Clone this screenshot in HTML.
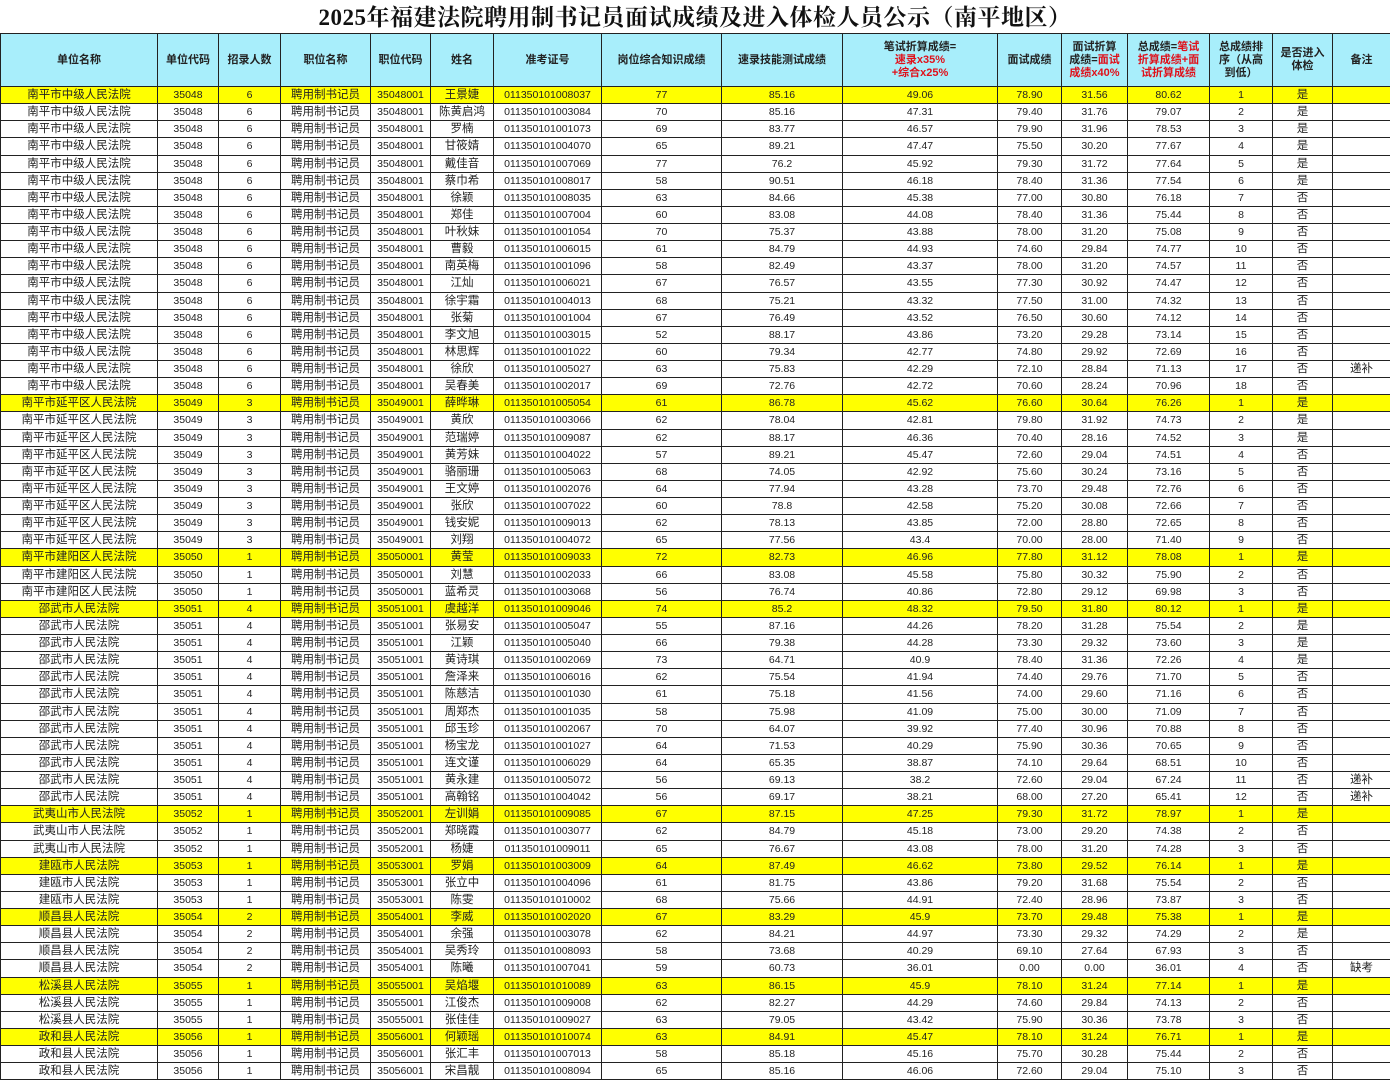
<!DOCTYPE html>
<html><head><meta charset="utf-8"><style>
*{margin:0;padding:0;box-sizing:border-box}
body{width:1390px;height:1080px;background:#fff;overflow:hidden;font-family:"Liberation Sans","Noto Sans CJK SC",sans-serif}
h1{position:absolute;left:0;top:1px;width:1390px;height:33px;text-align:center;font:bold 23px/34px "Liberation Serif","Noto Serif CJK SC",serif;color:#111;letter-spacing:0.5px}
table{position:absolute;left:0;top:33px;width:1390px;border-collapse:collapse;table-layout:fixed}
td,th{border:1px solid #222;text-align:center;font-size:10.5px;color:#222;white-space:nowrap;overflow:hidden;padding:0;line-height:14px}
th{background:#a8eefb;height:53px;font-weight:bold;font-size:11px;white-space:normal;line-height:13px}
th .r{color:#e0101a}
tr.d td{height:17.14px}
tr.y td{background:#ffff00}
td.n{font-size:11.5px}
</style></head><body>
<h1>2025年福建法院聘用制书记员面试成绩及进入体检人员公示（南平地区）</h1>
<table>
<colgroup><col style="width:157px"><col style="width:61px"><col style="width:62px"><col style="width:90px"><col style="width:60px"><col style="width:63px"><col style="width:108px"><col style="width:120px"><col style="width:121px"><col style="width:155px"><col style="width:64px"><col style="width:66px"><col style="width:82px"><col style="width:63px"><col style="width:60px"><col style="width:58px"></colgroup>
<tr><th>单位名称</th><th>单位代码</th><th>招录人数</th><th>职位名称</th><th>职位代码</th><th>姓名</th><th>准考证号</th><th>岗位综合知识成绩</th><th>速录技能测试成绩</th><th>笔试折算成绩=<br><span class="r">速录x35%<br>+综合x25%</span></th><th>面试成绩</th><th>面试折算<br>成绩=<span class="r">面试<br>成绩x40%</span></th><th>总成绩=<span class="r">笔试<br>折算成绩+面<br>试折算成绩</span></th><th>总成绩排<br>序（从高<br>到低）</th><th>是否进入<br>体检</th><th>备注</th></tr>
<tr class="d y"><td class="n">南平市中级人民法院</td><td>35048</td><td>6</td><td class="n">聘用制书记员</td><td>35048001</td><td class="n">王景婕</td><td>011350101008037</td><td>77</td><td>85.16</td><td>49.06</td><td>78.90</td><td>31.56</td><td>80.62</td><td>1</td><td class="n">是</td><td></td></tr>
<tr class="d"><td class="n">南平市中级人民法院</td><td>35048</td><td>6</td><td class="n">聘用制书记员</td><td>35048001</td><td class="n">陈黄启鸿</td><td>011350101003084</td><td>70</td><td>85.16</td><td>47.31</td><td>79.40</td><td>31.76</td><td>79.07</td><td>2</td><td class="n">是</td><td></td></tr>
<tr class="d"><td class="n">南平市中级人民法院</td><td>35048</td><td>6</td><td class="n">聘用制书记员</td><td>35048001</td><td class="n">罗楠</td><td>011350101001073</td><td>69</td><td>83.77</td><td>46.57</td><td>79.90</td><td>31.96</td><td>78.53</td><td>3</td><td class="n">是</td><td></td></tr>
<tr class="d"><td class="n">南平市中级人民法院</td><td>35048</td><td>6</td><td class="n">聘用制书记员</td><td>35048001</td><td class="n">甘筱婧</td><td>011350101004070</td><td>65</td><td>89.21</td><td>47.47</td><td>75.50</td><td>30.20</td><td>77.67</td><td>4</td><td class="n">是</td><td></td></tr>
<tr class="d"><td class="n">南平市中级人民法院</td><td>35048</td><td>6</td><td class="n">聘用制书记员</td><td>35048001</td><td class="n">戴佳音</td><td>011350101007069</td><td>77</td><td>76.2</td><td>45.92</td><td>79.30</td><td>31.72</td><td>77.64</td><td>5</td><td class="n">是</td><td></td></tr>
<tr class="d"><td class="n">南平市中级人民法院</td><td>35048</td><td>6</td><td class="n">聘用制书记员</td><td>35048001</td><td class="n">蔡巾希</td><td>011350101008017</td><td>58</td><td>90.51</td><td>46.18</td><td>78.40</td><td>31.36</td><td>77.54</td><td>6</td><td class="n">是</td><td></td></tr>
<tr class="d"><td class="n">南平市中级人民法院</td><td>35048</td><td>6</td><td class="n">聘用制书记员</td><td>35048001</td><td class="n">徐颖</td><td>011350101008035</td><td>63</td><td>84.66</td><td>45.38</td><td>77.00</td><td>30.80</td><td>76.18</td><td>7</td><td class="n">否</td><td></td></tr>
<tr class="d"><td class="n">南平市中级人民法院</td><td>35048</td><td>6</td><td class="n">聘用制书记员</td><td>35048001</td><td class="n">郑佳</td><td>011350101007004</td><td>60</td><td>83.08</td><td>44.08</td><td>78.40</td><td>31.36</td><td>75.44</td><td>8</td><td class="n">否</td><td></td></tr>
<tr class="d"><td class="n">南平市中级人民法院</td><td>35048</td><td>6</td><td class="n">聘用制书记员</td><td>35048001</td><td class="n">叶秋妹</td><td>011350101001054</td><td>70</td><td>75.37</td><td>43.88</td><td>78.00</td><td>31.20</td><td>75.08</td><td>9</td><td class="n">否</td><td></td></tr>
<tr class="d"><td class="n">南平市中级人民法院</td><td>35048</td><td>6</td><td class="n">聘用制书记员</td><td>35048001</td><td class="n">曹毅</td><td>011350101006015</td><td>61</td><td>84.79</td><td>44.93</td><td>74.60</td><td>29.84</td><td>74.77</td><td>10</td><td class="n">否</td><td></td></tr>
<tr class="d"><td class="n">南平市中级人民法院</td><td>35048</td><td>6</td><td class="n">聘用制书记员</td><td>35048001</td><td class="n">南英梅</td><td>011350101001096</td><td>58</td><td>82.49</td><td>43.37</td><td>78.00</td><td>31.20</td><td>74.57</td><td>11</td><td class="n">否</td><td></td></tr>
<tr class="d"><td class="n">南平市中级人民法院</td><td>35048</td><td>6</td><td class="n">聘用制书记员</td><td>35048001</td><td class="n">江灿</td><td>011350101006021</td><td>67</td><td>76.57</td><td>43.55</td><td>77.30</td><td>30.92</td><td>74.47</td><td>12</td><td class="n">否</td><td></td></tr>
<tr class="d"><td class="n">南平市中级人民法院</td><td>35048</td><td>6</td><td class="n">聘用制书记员</td><td>35048001</td><td class="n">徐宇霜</td><td>011350101004013</td><td>68</td><td>75.21</td><td>43.32</td><td>77.50</td><td>31.00</td><td>74.32</td><td>13</td><td class="n">否</td><td></td></tr>
<tr class="d"><td class="n">南平市中级人民法院</td><td>35048</td><td>6</td><td class="n">聘用制书记员</td><td>35048001</td><td class="n">张菊</td><td>011350101001004</td><td>67</td><td>76.49</td><td>43.52</td><td>76.50</td><td>30.60</td><td>74.12</td><td>14</td><td class="n">否</td><td></td></tr>
<tr class="d"><td class="n">南平市中级人民法院</td><td>35048</td><td>6</td><td class="n">聘用制书记员</td><td>35048001</td><td class="n">李文旭</td><td>011350101003015</td><td>52</td><td>88.17</td><td>43.86</td><td>73.20</td><td>29.28</td><td>73.14</td><td>15</td><td class="n">否</td><td></td></tr>
<tr class="d"><td class="n">南平市中级人民法院</td><td>35048</td><td>6</td><td class="n">聘用制书记员</td><td>35048001</td><td class="n">林思辉</td><td>011350101001022</td><td>60</td><td>79.34</td><td>42.77</td><td>74.80</td><td>29.92</td><td>72.69</td><td>16</td><td class="n">否</td><td></td></tr>
<tr class="d"><td class="n">南平市中级人民法院</td><td>35048</td><td>6</td><td class="n">聘用制书记员</td><td>35048001</td><td class="n">徐欣</td><td>011350101005027</td><td>63</td><td>75.83</td><td>42.29</td><td>72.10</td><td>28.84</td><td>71.13</td><td>17</td><td class="n">否</td><td class="n">递补</td></tr>
<tr class="d"><td class="n">南平市中级人民法院</td><td>35048</td><td>6</td><td class="n">聘用制书记员</td><td>35048001</td><td class="n">吴春美</td><td>011350101002017</td><td>69</td><td>72.76</td><td>42.72</td><td>70.60</td><td>28.24</td><td>70.96</td><td>18</td><td class="n">否</td><td></td></tr>
<tr class="d y"><td class="n">南平市延平区人民法院</td><td>35049</td><td>3</td><td class="n">聘用制书记员</td><td>35049001</td><td class="n">薛晔琳</td><td>011350101005054</td><td>61</td><td>86.78</td><td>45.62</td><td>76.60</td><td>30.64</td><td>76.26</td><td>1</td><td class="n">是</td><td></td></tr>
<tr class="d"><td class="n">南平市延平区人民法院</td><td>35049</td><td>3</td><td class="n">聘用制书记员</td><td>35049001</td><td class="n">黄欣</td><td>011350101003066</td><td>62</td><td>78.04</td><td>42.81</td><td>79.80</td><td>31.92</td><td>74.73</td><td>2</td><td class="n">是</td><td></td></tr>
<tr class="d"><td class="n">南平市延平区人民法院</td><td>35049</td><td>3</td><td class="n">聘用制书记员</td><td>35049001</td><td class="n">范瑞婷</td><td>011350101009087</td><td>62</td><td>88.17</td><td>46.36</td><td>70.40</td><td>28.16</td><td>74.52</td><td>3</td><td class="n">是</td><td></td></tr>
<tr class="d"><td class="n">南平市延平区人民法院</td><td>35049</td><td>3</td><td class="n">聘用制书记员</td><td>35049001</td><td class="n">黄芳妹</td><td>011350101004022</td><td>57</td><td>89.21</td><td>45.47</td><td>72.60</td><td>29.04</td><td>74.51</td><td>4</td><td class="n">否</td><td></td></tr>
<tr class="d"><td class="n">南平市延平区人民法院</td><td>35049</td><td>3</td><td class="n">聘用制书记员</td><td>35049001</td><td class="n">骆丽珊</td><td>011350101005063</td><td>68</td><td>74.05</td><td>42.92</td><td>75.60</td><td>30.24</td><td>73.16</td><td>5</td><td class="n">否</td><td></td></tr>
<tr class="d"><td class="n">南平市延平区人民法院</td><td>35049</td><td>3</td><td class="n">聘用制书记员</td><td>35049001</td><td class="n">王文婷</td><td>011350101002076</td><td>64</td><td>77.94</td><td>43.28</td><td>73.70</td><td>29.48</td><td>72.76</td><td>6</td><td class="n">否</td><td></td></tr>
<tr class="d"><td class="n">南平市延平区人民法院</td><td>35049</td><td>3</td><td class="n">聘用制书记员</td><td>35049001</td><td class="n">张欣</td><td>011350101007022</td><td>60</td><td>78.8</td><td>42.58</td><td>75.20</td><td>30.08</td><td>72.66</td><td>7</td><td class="n">否</td><td></td></tr>
<tr class="d"><td class="n">南平市延平区人民法院</td><td>35049</td><td>3</td><td class="n">聘用制书记员</td><td>35049001</td><td class="n">钱安妮</td><td>011350101009013</td><td>62</td><td>78.13</td><td>43.85</td><td>72.00</td><td>28.80</td><td>72.65</td><td>8</td><td class="n">否</td><td></td></tr>
<tr class="d"><td class="n">南平市延平区人民法院</td><td>35049</td><td>3</td><td class="n">聘用制书记员</td><td>35049001</td><td class="n">刘翔</td><td>011350101004072</td><td>65</td><td>77.56</td><td>43.4</td><td>70.00</td><td>28.00</td><td>71.40</td><td>9</td><td class="n">否</td><td></td></tr>
<tr class="d y"><td class="n">南平市建阳区人民法院</td><td>35050</td><td>1</td><td class="n">聘用制书记员</td><td>35050001</td><td class="n">黄莹</td><td>011350101009033</td><td>72</td><td>82.73</td><td>46.96</td><td>77.80</td><td>31.12</td><td>78.08</td><td>1</td><td class="n">是</td><td></td></tr>
<tr class="d"><td class="n">南平市建阳区人民法院</td><td>35050</td><td>1</td><td class="n">聘用制书记员</td><td>35050001</td><td class="n">刘慧</td><td>011350101002033</td><td>66</td><td>83.08</td><td>45.58</td><td>75.80</td><td>30.32</td><td>75.90</td><td>2</td><td class="n">否</td><td></td></tr>
<tr class="d"><td class="n">南平市建阳区人民法院</td><td>35050</td><td>1</td><td class="n">聘用制书记员</td><td>35050001</td><td class="n">蓝希灵</td><td>011350101003068</td><td>56</td><td>76.74</td><td>40.86</td><td>72.80</td><td>29.12</td><td>69.98</td><td>3</td><td class="n">否</td><td></td></tr>
<tr class="d y"><td class="n">邵武市人民法院</td><td>35051</td><td>4</td><td class="n">聘用制书记员</td><td>35051001</td><td class="n">虞越洋</td><td>011350101009046</td><td>74</td><td>85.2</td><td>48.32</td><td>79.50</td><td>31.80</td><td>80.12</td><td>1</td><td class="n">是</td><td></td></tr>
<tr class="d"><td class="n">邵武市人民法院</td><td>35051</td><td>4</td><td class="n">聘用制书记员</td><td>35051001</td><td class="n">张易安</td><td>011350101005047</td><td>55</td><td>87.16</td><td>44.26</td><td>78.20</td><td>31.28</td><td>75.54</td><td>2</td><td class="n">是</td><td></td></tr>
<tr class="d"><td class="n">邵武市人民法院</td><td>35051</td><td>4</td><td class="n">聘用制书记员</td><td>35051001</td><td class="n">江颖</td><td>011350101005040</td><td>66</td><td>79.38</td><td>44.28</td><td>73.30</td><td>29.32</td><td>73.60</td><td>3</td><td class="n">是</td><td></td></tr>
<tr class="d"><td class="n">邵武市人民法院</td><td>35051</td><td>4</td><td class="n">聘用制书记员</td><td>35051001</td><td class="n">黄诗琪</td><td>011350101002069</td><td>73</td><td>64.71</td><td>40.9</td><td>78.40</td><td>31.36</td><td>72.26</td><td>4</td><td class="n">是</td><td></td></tr>
<tr class="d"><td class="n">邵武市人民法院</td><td>35051</td><td>4</td><td class="n">聘用制书记员</td><td>35051001</td><td class="n">詹泽来</td><td>011350101006016</td><td>62</td><td>75.54</td><td>41.94</td><td>74.40</td><td>29.76</td><td>71.70</td><td>5</td><td class="n">否</td><td></td></tr>
<tr class="d"><td class="n">邵武市人民法院</td><td>35051</td><td>4</td><td class="n">聘用制书记员</td><td>35051001</td><td class="n">陈慈洁</td><td>011350101001030</td><td>61</td><td>75.18</td><td>41.56</td><td>74.00</td><td>29.60</td><td>71.16</td><td>6</td><td class="n">否</td><td></td></tr>
<tr class="d"><td class="n">邵武市人民法院</td><td>35051</td><td>4</td><td class="n">聘用制书记员</td><td>35051001</td><td class="n">周郑杰</td><td>011350101001035</td><td>58</td><td>75.98</td><td>41.09</td><td>75.00</td><td>30.00</td><td>71.09</td><td>7</td><td class="n">否</td><td></td></tr>
<tr class="d"><td class="n">邵武市人民法院</td><td>35051</td><td>4</td><td class="n">聘用制书记员</td><td>35051001</td><td class="n">邱玉珍</td><td>011350101002067</td><td>70</td><td>64.07</td><td>39.92</td><td>77.40</td><td>30.96</td><td>70.88</td><td>8</td><td class="n">否</td><td></td></tr>
<tr class="d"><td class="n">邵武市人民法院</td><td>35051</td><td>4</td><td class="n">聘用制书记员</td><td>35051001</td><td class="n">杨宝龙</td><td>011350101001027</td><td>64</td><td>71.53</td><td>40.29</td><td>75.90</td><td>30.36</td><td>70.65</td><td>9</td><td class="n">否</td><td></td></tr>
<tr class="d"><td class="n">邵武市人民法院</td><td>35051</td><td>4</td><td class="n">聘用制书记员</td><td>35051001</td><td class="n">连文谨</td><td>011350101006029</td><td>64</td><td>65.35</td><td>38.87</td><td>74.10</td><td>29.64</td><td>68.51</td><td>10</td><td class="n">否</td><td></td></tr>
<tr class="d"><td class="n">邵武市人民法院</td><td>35051</td><td>4</td><td class="n">聘用制书记员</td><td>35051001</td><td class="n">黄永建</td><td>011350101005072</td><td>56</td><td>69.13</td><td>38.2</td><td>72.60</td><td>29.04</td><td>67.24</td><td>11</td><td class="n">否</td><td class="n">递补</td></tr>
<tr class="d"><td class="n">邵武市人民法院</td><td>35051</td><td>4</td><td class="n">聘用制书记员</td><td>35051001</td><td class="n">高翰铭</td><td>011350101004042</td><td>56</td><td>69.17</td><td>38.21</td><td>68.00</td><td>27.20</td><td>65.41</td><td>12</td><td class="n">否</td><td class="n">递补</td></tr>
<tr class="d y"><td class="n">武夷山市人民法院</td><td>35052</td><td>1</td><td class="n">聘用制书记员</td><td>35052001</td><td class="n">左训娟</td><td>011350101009085</td><td>67</td><td>87.15</td><td>47.25</td><td>79.30</td><td>31.72</td><td>78.97</td><td>1</td><td class="n">是</td><td></td></tr>
<tr class="d"><td class="n">武夷山市人民法院</td><td>35052</td><td>1</td><td class="n">聘用制书记员</td><td>35052001</td><td class="n">郑晓霞</td><td>011350101003077</td><td>62</td><td>84.79</td><td>45.18</td><td>73.00</td><td>29.20</td><td>74.38</td><td>2</td><td class="n">否</td><td></td></tr>
<tr class="d"><td class="n">武夷山市人民法院</td><td>35052</td><td>1</td><td class="n">聘用制书记员</td><td>35052001</td><td class="n">杨婕</td><td>011350101009011</td><td>65</td><td>76.67</td><td>43.08</td><td>78.00</td><td>31.20</td><td>74.28</td><td>3</td><td class="n">否</td><td></td></tr>
<tr class="d y"><td class="n">建瓯市人民法院</td><td>35053</td><td>1</td><td class="n">聘用制书记员</td><td>35053001</td><td class="n">罗娟</td><td>011350101003009</td><td>64</td><td>87.49</td><td>46.62</td><td>73.80</td><td>29.52</td><td>76.14</td><td>1</td><td class="n">是</td><td></td></tr>
<tr class="d"><td class="n">建瓯市人民法院</td><td>35053</td><td>1</td><td class="n">聘用制书记员</td><td>35053001</td><td class="n">张立中</td><td>011350101004096</td><td>61</td><td>81.75</td><td>43.86</td><td>79.20</td><td>31.68</td><td>75.54</td><td>2</td><td class="n">否</td><td></td></tr>
<tr class="d"><td class="n">建瓯市人民法院</td><td>35053</td><td>1</td><td class="n">聘用制书记员</td><td>35053001</td><td class="n">陈雯</td><td>011350101010002</td><td>68</td><td>75.66</td><td>44.91</td><td>72.40</td><td>28.96</td><td>73.87</td><td>3</td><td class="n">否</td><td></td></tr>
<tr class="d y"><td class="n">顺昌县人民法院</td><td>35054</td><td>2</td><td class="n">聘用制书记员</td><td>35054001</td><td class="n">李威</td><td>011350101002020</td><td>67</td><td>83.29</td><td>45.9</td><td>73.70</td><td>29.48</td><td>75.38</td><td>1</td><td class="n">是</td><td></td></tr>
<tr class="d"><td class="n">顺昌县人民法院</td><td>35054</td><td>2</td><td class="n">聘用制书记员</td><td>35054001</td><td class="n">余强</td><td>011350101003078</td><td>62</td><td>84.21</td><td>44.97</td><td>73.30</td><td>29.32</td><td>74.29</td><td>2</td><td class="n">是</td><td></td></tr>
<tr class="d"><td class="n">顺昌县人民法院</td><td>35054</td><td>2</td><td class="n">聘用制书记员</td><td>35054001</td><td class="n">吴秀玲</td><td>011350101008093</td><td>58</td><td>73.68</td><td>40.29</td><td>69.10</td><td>27.64</td><td>67.93</td><td>3</td><td class="n">否</td><td></td></tr>
<tr class="d"><td class="n">顺昌县人民法院</td><td>35054</td><td>2</td><td class="n">聘用制书记员</td><td>35054001</td><td class="n">陈曦</td><td>011350101007041</td><td>59</td><td>60.73</td><td>36.01</td><td>0.00</td><td>0.00</td><td>36.01</td><td>4</td><td class="n">否</td><td class="n">缺考</td></tr>
<tr class="d y"><td class="n">松溪县人民法院</td><td>35055</td><td>1</td><td class="n">聘用制书记员</td><td>35055001</td><td class="n">吴焰堰</td><td>011350101010089</td><td>63</td><td>86.15</td><td>45.9</td><td>78.10</td><td>31.24</td><td>77.14</td><td>1</td><td class="n">是</td><td></td></tr>
<tr class="d"><td class="n">松溪县人民法院</td><td>35055</td><td>1</td><td class="n">聘用制书记员</td><td>35055001</td><td class="n">江俊杰</td><td>011350101009008</td><td>62</td><td>82.27</td><td>44.29</td><td>74.60</td><td>29.84</td><td>74.13</td><td>2</td><td class="n">否</td><td></td></tr>
<tr class="d"><td class="n">松溪县人民法院</td><td>35055</td><td>1</td><td class="n">聘用制书记员</td><td>35055001</td><td class="n">张佳佳</td><td>011350101009027</td><td>63</td><td>79.05</td><td>43.42</td><td>75.90</td><td>30.36</td><td>73.78</td><td>3</td><td class="n">否</td><td></td></tr>
<tr class="d y"><td class="n">政和县人民法院</td><td>35056</td><td>1</td><td class="n">聘用制书记员</td><td>35056001</td><td class="n">何颖瑶</td><td>011350101010074</td><td>63</td><td>84.91</td><td>45.47</td><td>78.10</td><td>31.24</td><td>76.71</td><td>1</td><td class="n">是</td><td></td></tr>
<tr class="d"><td class="n">政和县人民法院</td><td>35056</td><td>1</td><td class="n">聘用制书记员</td><td>35056001</td><td class="n">张汇丰</td><td>011350101007013</td><td>58</td><td>85.18</td><td>45.16</td><td>75.70</td><td>30.28</td><td>75.44</td><td>2</td><td class="n">否</td><td></td></tr>
<tr class="d"><td class="n">政和县人民法院</td><td>35056</td><td>1</td><td class="n">聘用制书记员</td><td>35056001</td><td class="n">宋昌靓</td><td>011350101008094</td><td>65</td><td>85.16</td><td>46.06</td><td>72.60</td><td>29.04</td><td>75.10</td><td>3</td><td class="n">否</td><td></td></tr>
</table>
</body></html>
